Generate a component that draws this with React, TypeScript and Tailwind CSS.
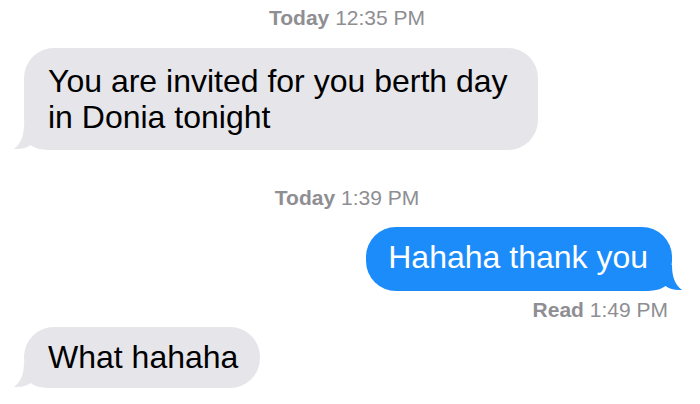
import type { ReactNode } from "react";

const FONT = "font-['Liberation_Sans',Arial,sans-serif]";

function Tail({ side, color }: { side: "left" | "right"; color: string }) {
  return (
    <svg
      width="40"
      height="26"
      viewBox="0 0 40 26"
      className={
        side === "left"
          ? "absolute bottom-0 left-[-10px]"
          : "absolute bottom-0 right-[-10px] -scale-x-100"
      }
    >
      <path
        d="M10 0 C10 11 7.5 19.5 0 25 C7 25.6 12.5 23.8 16.5 21 C20.5 24 26 26 40 26 L40 0 Z"
        fill={color}
      />
    </svg>
  );
}

function Stamp({ label, time, className = "" }: { label: string; time: string; className?: string }) {
  return (
    <div className={`text-[21px] leading-[24px] text-[#8e8e93] ${className}`}>
      <span className="font-bold">{label}</span> {time}
    </div>
  );
}

function Bubble({
  side,
  className,
  children,
}: {
  side: "left" | "right";
  className: string;
  children: ReactNode;
}) {
  const color = side === "left" ? "#e5e5ea" : "#1b8cfa";
  return (
    <div
      className={`relative rounded-[30px] text-[32px] leading-[36px] ${
        side === "left" ? "bg-[#e5e5ea] text-black" : "bg-[#1b8cfa] text-white"
      } ${className}`}
    >
      <Tail side={side} color={color} />
      <span className="relative">{children}</span>
    </div>
  );
}

export default function App() {
  return (
    <div className={`${FONT} flex h-[404px] w-[700px] flex-col overflow-hidden bg-white`}>
      <Stamp label="Today" time="12:35 PM" className="mt-[6px] self-center pr-[6px]" />

      <Bubble side="left" className="ml-[24px] mt-[18px] w-[514px] pb-[15px] pl-[24px] pr-[12px] pt-[15px]">
        You are invited for you berth day
        <br />
        in Donia tonight
      </Bubble>

      <Stamp label="Today" time="1:39 PM" className="mt-[36px] self-center pr-[6px]" />

      <Bubble side="right" className="mr-[28px] mt-[17px] self-end pb-[16px] pl-[22px] pr-[24px] pt-[12px]">
        Hahaha thank you
      </Bubble>

      <Stamp label="Read" time="1:49 PM" className="mr-[32px] mt-[7px] self-end" />

      <Bubble side="left" className="ml-[24px] mt-[5px] self-start pb-[13px] pl-[24px] pr-[22px] pt-[12px]">
        What hahaha
      </Bubble>
    </div>
  );
}
